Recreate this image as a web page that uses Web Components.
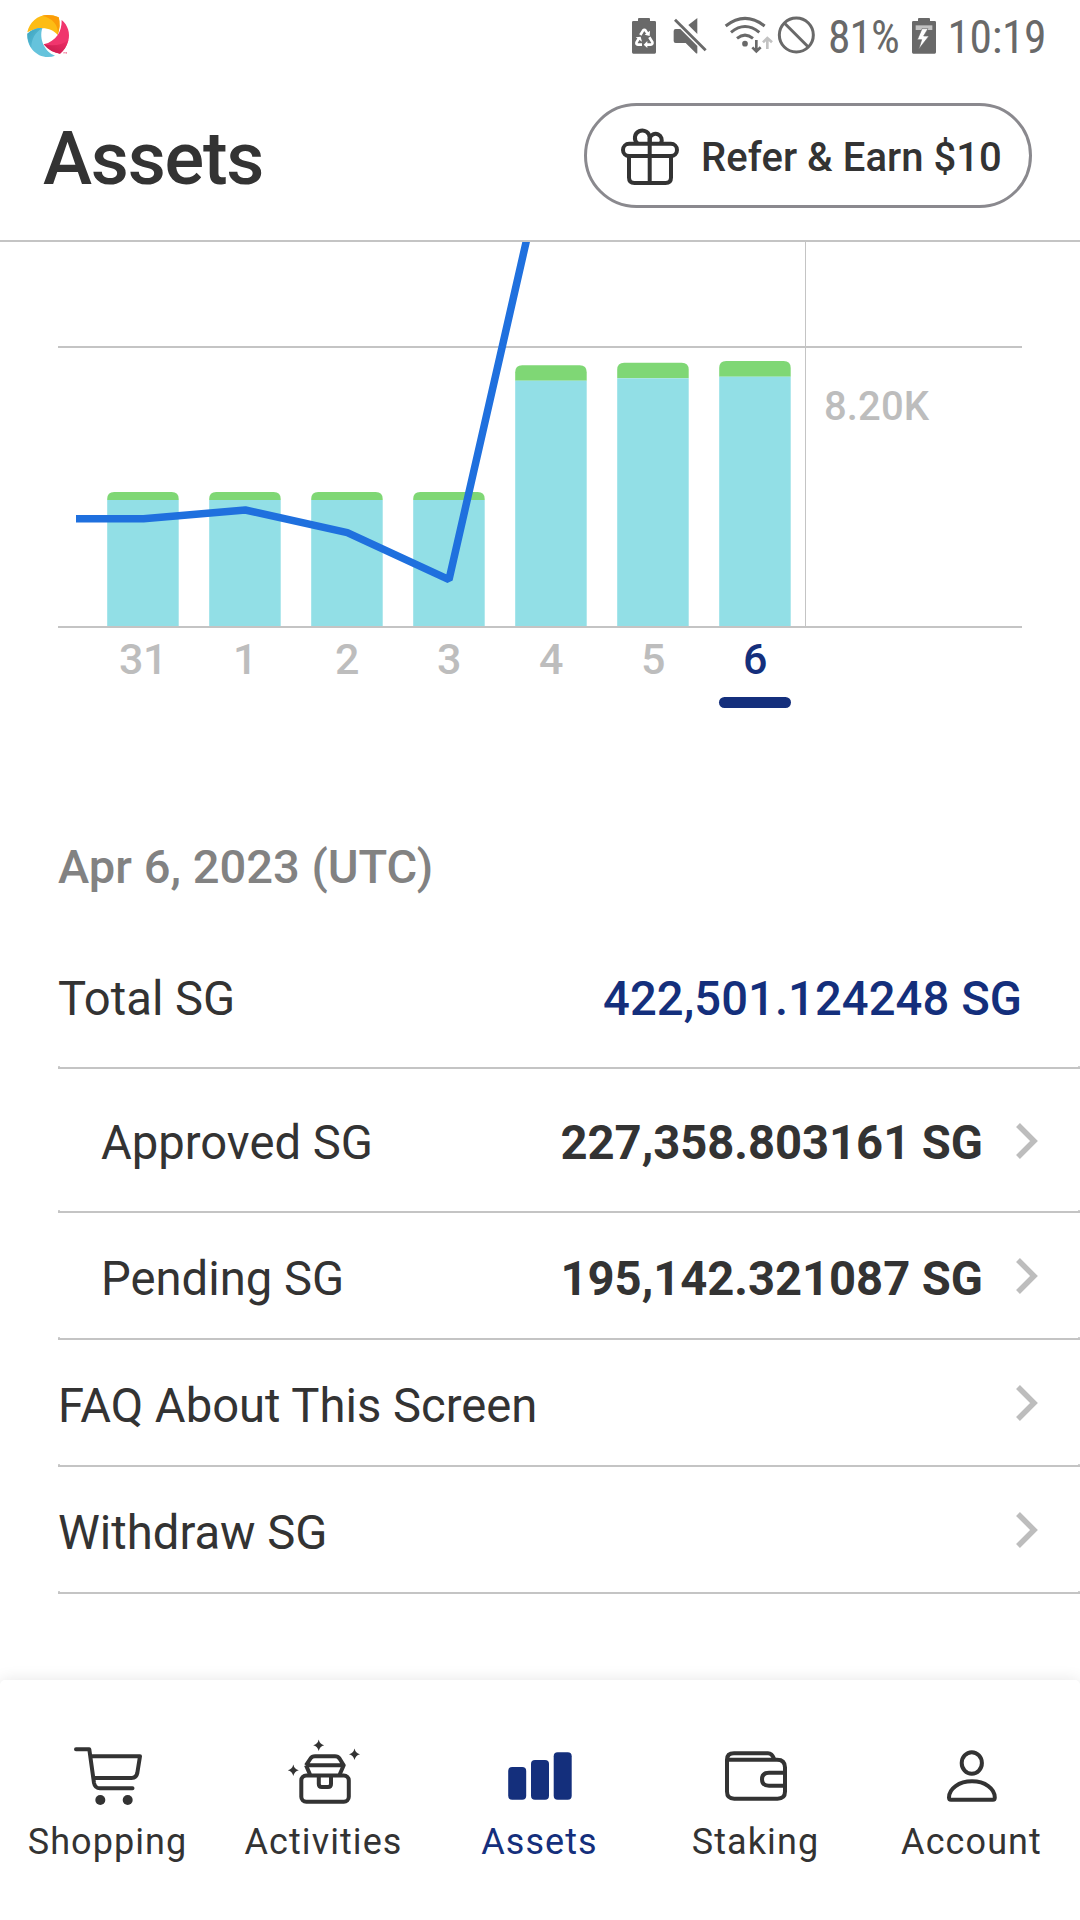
<!DOCTYPE html>
<html lang="en">
<head>
<meta charset="utf-8">
<title>Assets</title>
<style>
  body { margin: 0; background: #fff; font-family: Roboto, "Noto Sans", sans-serif; color: #333; }
</style>
</head>
<body>
<app-screen>
  <status-bar slot="top"></status-bar>
  <page-header slot="top">Assets<refer-button slot="action">Refer &amp; Earn $10</refer-button></page-header>
  <asset-chart></asset-chart>
  <day-axis days="31,1,2,3,4,5,6" selected="6"></day-axis>
  <date-heading>Apr 6, 2023 (UTC)</date-heading>
  <asset-row total>Total SG<span slot="value">422,501.124248 SG</span></asset-row>
  <asset-row tall nested link>Approved SG<span slot="value">227,358.803161 SG</span></asset-row>
  <asset-row nested link>Pending SG<span slot="value">195,142.321087 SG</span></asset-row>
  <asset-row link>FAQ About This Screen</asset-row>
  <asset-row link>Withdraw SG</asset-row>
  <tab-bar slot="bottom">
    <tab-item icon="cart">Shopping</tab-item>
    <tab-item icon="chest">Activities</tab-item>
    <tab-item icon="bars" active>Assets</tab-item>
    <tab-item icon="wallet">Staking</tab-item>
    <tab-item icon="person">Account</tab-item>
  </tab-bar>
</app-screen>

<script>
const define = (name, render) => customElements.define(name, class extends HTMLElement {
  constructor() { super(); this.attachShadow({ mode: 'open' }); }
  connectedCallback() { this.shadowRoot.innerHTML = render(this); }
});

define('app-screen', () => `
  <style>
    :host { display: flex; flex-direction: column; width: 1080px; height: 1920px; background: #fff; overflow: hidden; }
    main { flex: 1; min-height: 0; }
  </style>
  <slot name="top"></slot><main><slot></slot></main><slot name="bottom"></slot>`);

define('status-bar', () => `
  <style>
    :host { display: flex; height: 72px; flex: none; color: #696969; }
    svg { display: block; height: 60px; flex: none; }
    .logo { width: 50px; margin-left: 24px; }
    .right { display: flex; margin-left: 558px; }
    .mute { width: 36px; margin-left: 17px; }
    .wifi { width: 50px; margin-left: 15px; }
    .ban { width: 39px; margin-left: 3px; }
    .bolt { width: 24px; margin-left: 11px; }
    span { font: 400 45.500px/75px "Roboto Condensed", Roboto, sans-serif; white-space: nowrap; }
    .pct { width: 73px; margin-left: 12px; letter-spacing: -1px; }
    .time { margin-left: 11px; letter-spacing: -.35px; padding-left: .5px; }
  </style>
  <svg class="logo" viewBox="72 0 150 180">
    <defs>
      <linearGradient id="p" x1="0" y1="1" x2="1" y2="0"><stop offset="0" stop-color="#c4194a"/><stop offset="1" stop-color="#ef2f68"/></linearGradient>
      <linearGradient id="b" x1="0" y1="0" x2="1" y2="1"><stop offset="0" stop-color="#3ea3bd"/><stop offset="1" stop-color="#5ec3df"/></linearGradient>
    </defs>
    <path fill="#fdbc14" d="M82 97C88 67 112 45 144 45Q162 45 176 52Q183 76 173 105C156 83 120 76 82 97Z"/>
    <path fill="#fb9c08" d="M126 47Q150 42 176 52Q183 76 173 105C177 76 158 54 126 47Z"/>
    <path fill="#f0356d" d="M185 60C204 75 211 101 205 122Q198 147 180 161Q152 158 131 133C169 124 186 94 185 60Z"/>
    <path fill="url(#p)" d="M205 120Q198 147 180 161Q152 158 131 133C160 139 188 135 205 120Z"/>
    <path fill="#65c3dc" d="M127 84Q99 84 82 101C79 137 107 171 144 171Q156 171 165 167C135 156 116 118 127 84Z"/>
    <path fill="url(#b)" d="M127 84Q99 84 82 101Q82 124 94 143C94 116 106 97 127 84Z"/>
    <path fill="#f58ba8" d="M190 156h5v2h-2v4h-2v-4h-1zM196 156h5v6h-2v-3l-1 1-1-1v3h-1z"/>
  </svg>
  <div class="right">
    <svg style="width:24px" viewBox="66 0 72 180"><path fill="#696969" d="M87 54h30q3 0 3 3v6h14q4 0 4 4v90q0 4-4 4H70q-4 0-4-4V67q0-4 4-4h14v-6q0-3 3-3z"/>
      <g fill="none" stroke="#fff" stroke-width="8"><path d="M91 105l8-13q4-5 8 0l5 8"/><path d="M118 112l9 14q2 7-5 8h-13"/><path d="M96 134H84q-7-1-4-8l6-10"/></g>
      <path fill="#fff" d="M104 104l15 4 1-16zM112 123v21l-11-10zM77 112l15-2 4 15z"/></svg>
    <svg class="mute" viewBox="190 0 108 180"><g fill="#696969"><path d="M263 54v48l-27-27z"/><path d="M198 87h14l51 51v20q0 4-4 2l-31-31h-30q-6 0-6-6V93q0-6 6-6z"/><path d="M199 56l92 92-6 6-92-92z"/></g></svg>
    <svg class="wifi" viewBox="340 0 150 180"><g fill="none" stroke="#696969" stroke-width="9"><path d="M345 78Q403 32 462 78"/><path d="M361 97Q403 62 446 97"/><path d="M379 115Q403 96 427 115"/><path stroke-width="8" d="M437 120v34M425 142l12 12 13-12"/></g><circle cx="403" cy="131" r="8.500" fill="#696969"/><path d="M470 147v-34M457 127l13-13 14 13" fill="none" stroke="#c2c2c2" stroke-width="8"/></svg>
    <svg class="ban" viewBox="500 0 117 180"><g fill="none" stroke="#696969" stroke-width="9"><circle cx="558" cy="105" r="51"/><path d="M522 69l72 72"/></g></svg>
    <span class="pct">81%</span>
    <svg class="bolt" viewBox="906 0 72 180"><path fill="#696969" d="M927 54h30q3 0 3 3v6h14q4 0 4 4v90q0 4-4 4h-64q-4 0-4-4V67q0-4 4-4h14v-6q0-3 3-3z"/><path fill="#c2c2c2" d="M917 76h50v14h-50z"/><path fill="#fff" stroke="#696969" stroke-width="2" d="M936 86l-14 33h13l-9 29 31-40h-16l13-22z"/></svg>
    <span class="time">10:19</span>
  </div>`);

define('page-header', () => `
  <style>
    :host { display: flex; flex: none; box-sizing: border-box; height: 170px; justify-content: space-between; align-items: flex-start; padding: 31px 48px 0 43px; border-bottom: 2px solid #c4c4c4; }
    h1 { margin: 11px 0 0; font: 500 74px/90px Roboto, sans-serif; letter-spacing: -1.24px; color: #333; }
  </style>
  <h1><slot></slot></h1><slot name="action"></slot>`);

define('refer-button', () => `
  <style>
    :host { display: flex; box-sizing: border-box; width: 448px; height: 105px; border: 3px solid #8a898e; border-radius: 53px; align-items: center; padding-left: 32px; gap: 20px; font: 500 40px/48px Roboto, sans-serif; white-space: nowrap; letter-spacing: .05px; }
    svg { width: 62px; height: 62px; flex: none; }
    span { padding-top: 4px; }
  </style>
  <svg viewBox="0 0 62 62" fill="none" stroke="#333" stroke-width="4"><rect x="4" y="18.800" width="54" height="12.200" rx="6.100"/><path d="M10 31v21.500q0 5.500 5.500 5.500h31q5.500 0 5.500-5.500V31M30.700 58V13"/><path d="M18.500 18.500A7.400 7.400 0 1 1 30.700 13V19"/><path d="M30.700 13A6.200 6.200 0 1 1 42 18"/></svg>
  <span><slot></slot></span>`);

define('asset-chart', () => {
  const bars = [[492, 500], [492, 500], [492, 500], [492, 500], [365.3, 380.7], [362.7, 378.3], [361, 376.7]];
  return `
  <style>:host, svg { display: block; } svg { width: 1080px; height: 386px; }</style>
  <svg viewBox="0 242 1080 386">
    <g fill="#c4c4c4"><rect x="58" y="346" width="964" height="2"/><rect x="805" y="242" width="1" height="384"/></g>
    ${bars.map(([top, split], i) => { const x = 107.2 + 102 * i; return `
      <path fill="#7fd775" d="M${x} ${split}V${top + 7}q0-7 7-7h57.500q7 0 7 7V${split}z"/>
      <rect x="${x}" y="${split}" width="71.500" height="${626 - split}" fill="#92dfe6"/>`; }).join('')}
    <rect x="58" y="626" width="964" height="2" fill="#c4c4c4"/>
    <path d="M76 518.700H143.500L245.300 510L347.300 532.700L449 579.700L551 133" fill="none" stroke="#1f70de" stroke-width="7.500" stroke-linejoin="bevel"/>
    <text x="824" y="420" font-family="Roboto, sans-serif" font-size="40" font-weight="500" letter-spacing=".1" fill="#bdbdbd">8.20K</text>
  </svg>`;
});

define('day-axis', el => `
  <style>
    :host { display: flex; height: 80px; padding-left: 92px; }
    div { width: 102px; display: flex; flex-direction: column; align-items: center; font: 500 43px/60px Roboto, sans-serif; color: #bdbdbd; letter-spacing: -.5px; }
    span { padding-top: 1px; }
    .on { color: #142f7c; }
    i { width: 72px; height: 11px; border-radius: 6px; background: #142f7c; margin-top: 8px; }
  </style>
  ${el.getAttribute('days').split(',').map(d => d === el.getAttribute('selected') ? `<div class="on"><span>${d}</span><i></i></div>` : `<div><span>${d}</span></div>`).join('')}`);

define('date-heading', () => `
  <style>:host { display: block; box-sizing: border-box; height: 222px; padding: 129px 0 0 58px; font: 500 47.1px/60px Roboto, sans-serif; color: #828282; }</style>
  <slot></slot>`);

define('asset-row', el => `
  <style>
    :host { display: flex; box-sizing: border-box; height: 127px; margin-left: 58px; align-items: center; justify-content: space-between; border-bottom: 2px solid #c4c4c4; font: 400 47.2px/60px Roboto, sans-serif; white-space: nowrap; position: relative; }
    :host([tall]) { height: 144px; }
    :host([total]) { height: 139px; padding-right: 58px; }
    :host([nested]) { padding-left: 43px; }
    :host::before, :host::after { content: ""; position: absolute; bottom: 0; width: 2px; height: 1px; background: #d0d0d0; }
    :host::before { left: 0; } :host::after { right: 0; }
    .t { padding-top: 7px; }
    :host([tall]) .t { padding-top: 5px; }
    :host([total]) .t { padding-top: 0; }
    .end { display: flex; align-items: center; }
    .v { font-weight: 700; }
    :host([nested]) .v { letter-spacing: -.04px; }
    :host([total]) .v { font-weight: 500; color: #142f7c; letter-spacing: .06px; }
    svg { width: 22px; height: 36px; margin: 1px 42px 0 33px; }
  </style>
  <span class="t"><slot></slot></span>
  <span class="end"><span class="t v"><slot name="value"></slot></span>
  ${el.hasAttribute('link') ? '<svg viewBox="0 0 22 36"><path d="M2 2L18 18L2 34" fill="none" stroke="#bdbdbd" stroke-width="5.500"/></svg>' : ''}</span>`);

define('tab-bar', () => `
  <style>:host { display: flex; flex: none; height: 240px; background: #fff; border-radius: 5px 5px 0 0; box-shadow: 0 0 16px rgba(0,0,0,.1); position: relative; }</style>
  <slot></slot>`);

const ICONS = {
  cart: '<path stroke-linecap="round" stroke-linejoin="round" d="M8 13.300H21.300L26 47Q27 52.300 32 52.300H64.500M23 20.300H72L69.300 37Q68.300 42 63.500 42H26"/><g fill="currentColor" stroke="none"><circle cx="32.300" cy="64" r="5"/><circle cx="59.700" cy="64" r="5"/></g>',
  chest: '<rect x="17.300" y="39.500" width="47.500" height="26.300" rx="5"/><path stroke-linejoin="round" d="M22 29.300L26.500 22.500Q28 20.300 31 20.300H51Q54 20.300 55.500 22.500L59.700 29.300L55.700 38.500M22 29.300H59.700M22 29.300L26 38.500M34.800 39V48Q34.800 51 37.800 51H44Q47 51 47 48V39"/><path fill="currentColor" stroke="none" d="M34.700 3.500q1 4.700 5.500 5.800q-4.500 1.100-5.500 5.800q-1-4.700-5.500-5.800q4.500-1.100 5.500-5.800zM70.500 12.500q1 4.700 5.500 5.800q-4.500 1.100-5.500 5.800q-1-4.700-5.500-5.800q4.500-1.100 5.500-5.800zM9.300 28.500q1 4.700 5.500 5.800q-4.500 1.100-5.500 5.800q-1-4.700-5.500-5.800q4.500-1.100 5.500-5.800z"/>',
  bars: '<g fill="currentColor" stroke="none"><rect x="8.200" y="31" width="18" height="32.700" rx="4"/><rect x="31" y="24" width="18" height="39.700" rx="4"/><rect x="53.700" y="16.300" width="18" height="47.400" rx="4"/></g>',
  wallet: '<path d="M11 24V55.500Q11 62.700 18.200 62.700H61.500Q69 62.700 69 55.500V31.500Q69 23.700 61 23.700H11Q11 17.300 18 17.300H52Q56 17.300 58.500 23.500M69 36.700H53Q46 36.700 46 43.200T53 49.700H69"/>',
  person: '<ellipse cx="39.800" cy="27" rx="10.100" ry="10.800"/><path stroke-linejoin="round" d="M19 63.700H61Q62.800 63.700 62.800 61.500C62.800 52.500 53 45.300 40 45.300S17 52.500 17 61.500Q17 63.700 19 63.700Z"/>'
};
define('tab-item', el => `
  <style>
    :host { display: flex; flex: 1; flex-direction: column; align-items: center; padding-top: 56px; color: #333; font: 400 36px/44px Roboto, sans-serif; letter-spacing: 1.08px; }
    :host([active]) { color: #142f7c; }
    svg { width: 80px; height: 76px; margin-bottom: 8px; }
    span { margin-right: 1px; }
  </style>
  <svg viewBox="0 0 80 76" fill="none" stroke="currentColor" stroke-width="4">${ICONS[el.getAttribute('icon')]}</svg><span><slot></slot></span>`);
</script>
</body>
</html>
